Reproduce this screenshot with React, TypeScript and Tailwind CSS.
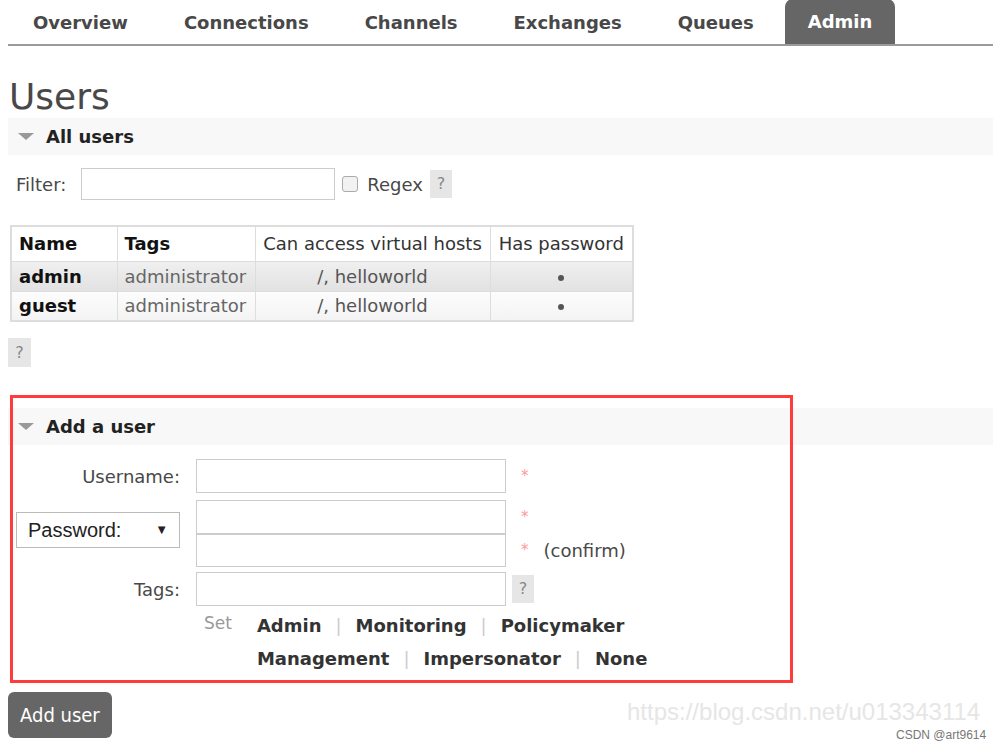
import React from "react";

const navItems = ["Overview", "Connections", "Channels", "Exchanges", "Queues"];

const users = [
  { name: "admin", tags: "administrator", vhosts: "/, helloworld", shaded: true },
  { name: "guest", tags: "administrator", vhosts: "/, helloworld", shaded: false },
];

function SectionHead({ title }: { title: string }) {
  return (
    <div className="flex h-[37px] items-center bg-[#f8f8f8] pl-[10px]">
      <span className="mr-[12px] inline-block h-0 w-0 border-x-[8px] border-t-[7px] border-x-transparent border-t-[#999]" />
      <h2 className="text-[18px] font-bold text-[#222]">{title}</h2>
    </div>
  );
}

function Help({ className = "" }: { className?: string }) {
  return (
    <span
      className={`inline-flex h-[28px] w-[22px] items-center justify-center bg-[#e6e6e6] text-[16px] text-[#888] ${className}`}
    >
      ?
    </span>
  );
}

function Req() {
  return <span className="ml-[15px] text-[15px] text-[#ff9999]">*</span>;
}

function Sep() {
  return <span className="mx-[14px] font-normal text-[#ccc]">|</span>;
}

export default function App() {
  return (
    <div
      className="relative h-[750px] w-[1006px] overflow-hidden bg-white text-[18px] text-[#484848]"
      style={{ fontFamily: '"DejaVu Sans", Verdana, sans-serif' }}
    >
      {/* nav */}
      <div className="ml-[8px] flex h-[46px] w-[985px] items-end border-b-2 border-[#9a9a9a]">
        {navItems.map((n) => (
          <div key={n} className="mr-[6px] flex h-[44px] items-center px-[25px] text-[18px] font-bold text-[#484848]">
            {n}
          </div>
        ))}
        <div className="flex h-[45px] items-center rounded-t-[8px] bg-[#666] px-[23px] text-[18px] font-bold text-white">
          Admin
        </div>
      </div>

      <div className="ml-[8px] w-[985px]">
        <h1 className="mt-[30px] ml-[1px] text-[36px] leading-[42px] font-normal text-[#484848]">Users</h1>

        <SectionHead title="All users" />

        <div className="mt-[13px] flex items-center pl-[8px]">
          <span>Filter:</span>
          <input className="ml-[15px] h-[32px] w-[254px] border border-[#ccc] bg-white" />
          <span className="ml-[7px] inline-block h-[16px] w-[16px] rounded-[3px] border border-[#aaa] bg-[#f2f2f2]" />
          <span className="ml-[9px]">Regex</span>
          <Help className="ml-[7px]" />
        </div>

        <table className="mt-[25px] ml-[2px] border-collapse border-2 border-[#ddd]">
          <thead>
            <tr className="h-[35px]">
              <th className="w-[106px] border border-[#ddd] px-[7px] text-left font-bold text-[#111]">Name</th>
              <th className="w-[138px] border border-[#ddd] px-[7px] text-left font-bold text-[#111]">Tags</th>
              <th className="w-[235px] border border-[#ddd] px-[6px] text-center font-normal text-[#333]">Can access virtual hosts</th>
              <th className="w-[143px] border border-[#ddd] px-[6px] text-center font-normal text-[#333]">Has password</th>
            </tr>
          </thead>
          <tbody>
            {users.map((u) => (
              <tr
                key={u.name}
                className={`h-[30px] ${u.shaded ? "bg-gradient-to-b from-[#f0f0f0] to-[#e2e2e2]" : "bg-gradient-to-b from-[#fdfdfd] to-[#f3f3f3]"}`}
              >
                <td className="border border-[#ddd] px-[7px] font-bold text-[#111]">{u.name}</td>
                <td className="border border-[#ddd] px-[7px] text-[#666]">{u.tags}</td>
                <td className="border border-[#ddd] px-[7px] text-center text-[#555]">{u.vhosts}</td>
                <td className="border border-[#ddd] px-[7px] text-center text-[#555]">
                  <span className="inline-block h-[6px] w-[6px] rounded-full bg-[#555] align-middle" />
                </td>
              </tr>
            ))}
          </tbody>
        </table>

        <Help className="mt-[16px] h-[29px] w-[23px]" />

        <div className="mt-[41px]">
          <SectionHead title="Add a user" />
        </div>

        <div className="mt-[14px]">
          <div className="flex items-center">
            <div className="w-[172px] text-right">Username:</div>
            <input className="ml-[16px] h-[34px] w-[310px] border border-[#ccc] bg-white" />
            <Req />
          </div>

          <div className="mt-[7px] flex items-start">
            <div
              className="mt-[12px] ml-[8px] flex h-[36px] w-[164px] items-center justify-between border border-[#bbb] bg-white px-[11px] text-[#222]"
              style={{ fontFamily: '"Liberation Sans", Arial, sans-serif', fontSize: 20 }}
            >
              <span>Password:</span>
              <span className="text-[13px]">▼</span>
            </div>
            <div className="ml-[16px] flex flex-col">
              <div className="flex items-center">
                <input className="h-[34px] w-[310px] border border-[#ccc] bg-white" />
                <Req />
              </div>
              <div className="flex items-center">
                <input className="h-[33px] w-[310px] border border-[#ccc] bg-white" />
                <Req />
                <span className="ml-[15px]">(confirm)</span>
              </div>
            </div>
          </div>

          <div className="mt-[5px] flex items-center">
            <div className="w-[172px] text-right">Tags:</div>
            <input className="ml-[16px] h-[34px] w-[310px] border border-[#ccc] bg-white" />
            <Help className="ml-[6px]" />
          </div>

          <div className="ml-[196px] mt-[5px] flex">
            <span className="text-[17px] text-[#999]">Set</span>
            <div className="ml-[25px] flex flex-col gap-[6px] pt-[1px] font-bold text-[#333]">
              <div className="flex items-center">
                <span>Admin</span>
                <Sep />
                <span>Monitoring</span>
                <Sep />
                <span>Policymaker</span>
              </div>
              <div className="flex items-center">
                <span>Management</span>
                <Sep />
                <span>Impersonator</span>
                <Sep />
                <span>None</span>
              </div>
            </div>
          </div>
        </div>

        <button
          className="mt-[20px] h-[46px] rounded-[6px] bg-[#666] px-[12px] text-[20px] text-white"
          style={{ fontFamily: '"DejaVu Sans Condensed", "DejaVu Sans", sans-serif' }}
        >
          Add user
        </button>
      </div>

      {/* red annotation box */}
      <div className="pointer-events-none absolute left-[10px] top-[395px] h-[288px] w-[783px] border-[3px] border-[#ff3b3b]" />

      {/* watermarks */}
      <div
        className="pointer-events-none absolute left-[627px] top-[698px] text-[24px] leading-[28px] text-[#e6e6e6]"
        style={{ fontFamily: '"Liberation Sans", Arial, sans-serif' }}
      >
        https://blog.csdn.net/u013343114
      </div>
      <div
        className="pointer-events-none absolute left-[896px] top-[728px] text-[12px] leading-[14px] text-[#777]"
        style={{ fontFamily: '"Liberation Sans", Arial, sans-serif' }}
      >
        CSDN @art9614
      </div>
    </div>
  );
}
